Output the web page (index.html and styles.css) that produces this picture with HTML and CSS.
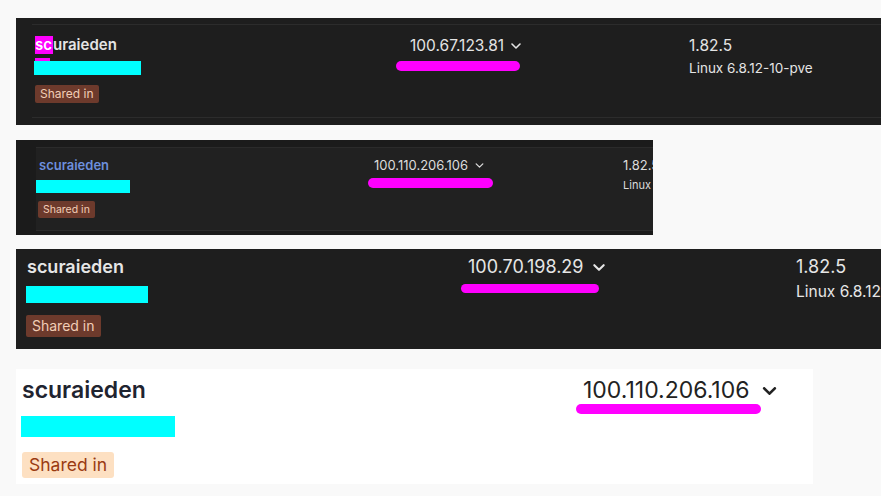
FILE: index.html
```html
<!DOCTYPE html>
<html>
<head>
<meta charset="utf-8">
<link rel="stylesheet" href="styles.css">
</head>
<body>
<div class="shot p1">
  <div class="row">
    <div class="col">
      <div class="name"><span class="mark">sc</span>uraieden</div>
      <div class="redact"><div class="redact-tab"></div><div class="cyan"></div></div>
      <span class="badge">Shared in</span>
    </div>
    <div class="col">
      <div class="ip">100.67.123.81 <svg class="chev" viewBox="0 0 10 6"><polyline points="1,1 5,5 9,1"/></svg></div>
      <div class="squiggle"></div>
    </div>
    <div class="col">
      <div class="ver">1.82.5</div>
      <div class="os">Linux 6.8.12-10-pve</div>
    </div>
  </div>
</div>

<div class="shot p2">
  <div class="row">
    <div class="col">
      <div class="name">scuraieden</div>
      <div class="cyan"></div>
      <span class="badge">Shared in</span>
    </div>
    <div class="col">
      <div class="ip">100.110.206.106 <svg class="chev" viewBox="0 0 10 6"><polyline points="1,1 5,5 9,1"/></svg></div>
      <div class="squiggle"></div>
    </div>
    <div class="col">
      <div class="ver">1.82.5</div>
      <div class="os">Linux 6.8.12-10-pve</div>
    </div>
  </div>
</div>

<div class="shot p3">
  <div class="row">
    <div class="col">
      <div class="name">scuraieden</div>
      <div class="cyan"></div>
      <span class="badge">Shared in</span>
    </div>
    <div class="col">
      <div class="ip">100.70.198.29 <svg class="chev" viewBox="0 0 10 6"><polyline points="1,1 5,5 9,1"/></svg></div>
      <div class="squiggle"></div>
    </div>
    <div class="col">
      <div class="ver">1.82.5</div>
      <div class="os">Linux 6.8.12-10-pve</div>
    </div>
  </div>
</div>

<div class="shot p4">
  <div class="row">
    <div class="col">
      <div class="name">scuraieden</div>
      <div class="cyan"></div>
      <span class="badge">Shared in</span>
    </div>
    <div class="col">
      <div class="ip">100.110.206.106 <svg class="chev" viewBox="0 0 10 6"><polyline points="1,1 5,5 9,1"/></svg></div>
      <div class="squiggle"></div>
    </div>
  </div>
</div>
</body>
</html>
```

FILE: styles.css
```css
* { box-sizing: border-box; }
html, body { margin: 0; padding: 0; }
body {
  background: #f9f9f9;
  font-family: Inter, "Noto Sans", sans-serif;
  width: 881px;
  height: 496px;
  overflow: hidden;
  display: flex;
  flex-direction: column;
  align-items: flex-start;
}
.shot { margin-left: 16px; overflow: hidden; }
.row { display: grid; }
.col { display: flex; flex-direction: column; align-items: flex-start; white-space: nowrap; }
.name { font-weight: 600; }
.ip { display: flex; align-items: center; }
.chev { fill: none; stroke-linecap: round; stroke-linejoin: round; }
.cyan { background: #00ffff; }
.squiggle { background: #ff00ff; border-radius: 6px; }
.badge { display: inline-block; border-radius: 2px; }

/* panel 1 */
.p1 { margin-top: 18px; width: 865px; height: 107px; background: #1e1e1e; color: #e4e4e4; }
.p1 .row {
  margin: 6px 0 0 16px; height: 94px;
  border-top: 1px solid #2c2c2c; border-bottom: 1px solid #2c2c2c;
  grid-template-columns: 362px 293px 1fr; padding: 11px 0 0 2px;
}
.p1 .name { font-size: 15px; line-height: 18px; padding-left: 1px; }
.p1 .mark { background: #ff00ff; color: #fff; display: inline-block; width: 18px; }
.p1 .redact { margin-top: 4px; }
.p1 .redact-tab { width: 15px; height: 3px; background: #ff00ff; margin-left: 1px; }
.p1 .cyan { width: 107px; height: 14px; }
.p1 .badge { margin: 10px 0 0 1px; font-size: 12px; line-height: 18px; padding: 0 5px; background: #6d3a2c; color: #f2cdb6; }
.p1 .ip { font-size: 15.5px; line-height: 18px; margin-left: 14px; margin-top: 1px; }
.p1 .chev { width: 10px; height: 6px; stroke: #e4e4e4; stroke-width: 1.6; margin-left: 7px; }
.p1 .squiggle { width: 124px; height: 10px; margin-top: 6px; }
.p1 .ver { font-size: 15.5px; line-height: 18px; margin-top: 1px; }
.p1 .os { font-size: 13.5px; line-height: 16px; margin-top: 5px; }

/* panel 2 */
.p2 { margin-top: 15px; width: 637px; height: 95px; background: #1b1b1b; color: #dcdcdc; }
.p2 .row {
  margin: 7px 0 0 20px; height: 84px; background: #212121;
  border-top: 1px solid #2b2b2b; border-bottom: 1px solid #2b2b2b;
  grid-template-columns: 332px 255px 1fr; padding: 9px 0 0 0;
}
.p2 .name { font-size: 13px; line-height: 16px; color: #6d8fdd; padding-left: 3px; }
.p2 .cyan { width: 94px; height: 13px; margin-top: 7px; }
.p2 .badge { margin: 8px 0 0 2px; font-size: 10.5px; line-height: 17px; padding: 0 5px; background: #6d3a2c; color: #f2cdb6; }
.p2 .ip { font-size: 13px; line-height: 16px; margin-left: 6px; }
.p2 .chev { width: 9px; height: 5px; stroke: #dcdcdc; stroke-width: 1.5; margin-left: 7px; }
.p2 .squiggle { width: 125px; height: 10px; margin-top: 5px; }
.p2 .ver { font-size: 13px; line-height: 16px; }
.p2 .os { font-size: 11px; line-height: 14px; margin-top: 5px; }

/* panel 3 */
.p3 { margin-top: 14px; width: 865px; height: 100px; background: #1e1e1e; color: #e6e6e6; }
.p3 .row { grid-template-columns: 435px 335px 1fr; padding: 7px 0 0 10px; }
.p3 .name { font-size: 18px; line-height: 22px; padding-left: 1px; }
.p3 .cyan { width: 122px; height: 17px; margin-top: 8px; }
.p3 .badge { margin-top: 12px; font-size: 14px; line-height: 22px; padding: 0 6px; background: #6d3a2c; color: #f2cdb6; }
.p3 .ip { font-size: 18px; line-height: 22px; margin-left: 7px; }
.p3 .chev { width: 12px; height: 7px; stroke: #e6e6e6; stroke-width: 1.8; margin-left: 10px; }
.p3 .squiggle { width: 138px; height: 9px; margin-top: 6px; }
.p3 .ver { font-size: 18px; line-height: 22px; }
.p3 .os { font-size: 15.5px; line-height: 18px; margin-top: 5px; }

/* panel 4 */
.p4 { margin-top: 20px; width: 797px; height: 115px; background: #ffffff; color: #1f2430; }
.p4 .row { grid-template-columns: 555px 1fr; padding: 8px 0 0 5px; }
.p4 .name { font-size: 23px; line-height: 27px; padding-left: 1px; }
.p4 .cyan { width: 154px; height: 21px; margin-top: 12px; }
.p4 .badge { margin: 15px 0 0 1px; font-size: 17.5px; line-height: 26px; padding: 0 7px; background: #fde0c2; color: #9a3b12; border-radius: 3px; }
.p4 .ip { font-size: 23px; line-height: 27px; margin-left: 7px; color: #222; }
.p4 .chev { width: 15px; height: 8px; stroke: #222; stroke-width: 2; margin-left: 13px; }
.p4 .squiggle { width: 185px; height: 10px; margin-top: 0px; }
```
